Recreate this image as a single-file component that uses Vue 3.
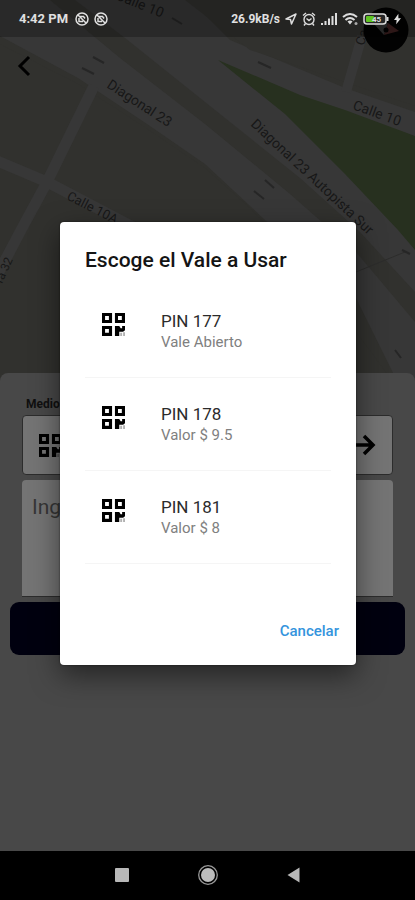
<script setup>
import { ref } from 'vue'

const note = ref('')
const vouchers = [
  { pin: 'PIN 177', detail: 'Vale Abierto' },
  { pin: 'PIN 178', detail: 'Valor $ 9.5' },
  { pin: 'PIN 181', detail: 'Valor $ 8' }
]
</script>

<template>
  <div class="screen">
    <svg width="0" height="0" class="defs" aria-hidden="true">
      <symbol id="qr" viewBox="0 0 24 24">
        <path fill-rule="evenodd" d="M0 0h10.500v10.500H0zM3.200 3.200v4h4v-4zM13.500 0H24v10.500H13.500zM16.700 3.200v4h4v-4zM0 13.500h10.500V24H0zM3.200 16.700v4h4v-4z" />
        <path d="M13.500 13.500h4.500l1.500 2.500h1.500v-2.500h3v4.500l-2 1.500h-4V24h-4.500z" />
        <path opacity=".3" d="M19 20.500h2V24h-2zM22 20h2v4h-2z" />
      </symbol>
      <symbol id="blocked" viewBox="0 0 14 14">
        <g fill="none" stroke="currentColor" stroke-width="1.500">
          <circle cx="7" cy="7" r="6" />
          <path d="M3 3l8 8M5 4.500h3.500l1.500 2M4 6v3.500h4" />
        </g>
      </symbol>
    </svg>

    <main class="page">
      <svg class="map" viewBox="0 0 415 383" preserveAspectRatio="xMidYMin slice" aria-hidden="true">
        <rect width="415" height="383" fill="#31312e" />
        <path fill="#373737" d="M0 0H190L230 40L345 88L415 112V383H398L356 298L265 220L205 164L150 126L78 78L0 36z" />
        <path fill="#31312e" d="M185 0H415V106L345 82L250 50z" />
        <path fill="#31312e" d="M50 0H75L125 38L215 110L300 178L360 232L415 292V322L356 252L290 194L205 124L120 58z" />
        <path fill="#31312e" d="M0 44L78 84L140 124L205 168L250 208L310 270L394 383H0z" />
        <path fill="#27301f" d="M218 60L300 95L345 110L415 136V250L398 230L345 174L285 114z" />
        <path d="M94 86L47 182L20 232L-8 285M-5 160L47 182L135 228" fill="none" stroke="#373737" stroke-width="11" />
        <path d="M362 36L346 92" fill="none" stroke="#373737" stroke-width="10" />
        <path d="M356 272L405 252" fill="none" stroke="#2d2d2c" stroke-width="1" />
        <path d="M93 57l11 6M82 68l12 6M172 18l10 6M258 62l13 6M265 180l9 8M254 191l10 8M395 350l6 8M402 250l8 4" fill="none" stroke="#262626" stroke-width="2" />
        <g fill="#171717" class="streets">
          <text font-size="14" transform="translate(106 87) rotate(33)">Diagonal 23</text>
          <text font-size="14" transform="translate(250 125) rotate(43)">Diagonal 23 Autopista Sur</text>
          <text font-size="14" transform="translate(352 109) rotate(20)">Calle 10</text>
          <text font-size="14" transform="translate(115 -1) rotate(22)">Calle 10</text>
          <text font-size="13" transform="translate(66 199) rotate(27)">Calle 10A</text>
          <text font-size="12" transform="translate(2 284) rotate(-66)">ra 32</text>
          <text font-size="13" transform="translate(364 46) rotate(-75)">Ca</text>
        </g>
      </svg>

      <form class="sheet" @submit.prevent>
        <div class="fields">
          <span class="label">Medio</span>
          <button type="button" class="method" aria-label="Medio">
            <svg class="qr"><use href="#qr" /></svg>
            <svg class="arrow" viewBox="0 0 24 24"><path d="M1 12h20M12 3l9 9-9 9" fill="none" stroke="#000" stroke-width="3.500" /></svg>
          </button>
          <textarea v-model="note" class="note" placeholder="Ingrese" aria-label="Ingrese"></textarea>
        </div>
        <button type="submit" class="submit" aria-label="Usar"></button>
      </form>
    </main>

    <nav class="nav">
      <button type="button" aria-label="Recientes"><svg viewBox="0 0 20 20"><rect x="3" y="3" width="14" height="14" rx="1" fill="#b8b8b8" /></svg></button>
      <button type="button" aria-label="Inicio"><svg viewBox="0 0 20 20"><circle cx="10" cy="10" r="9.300" fill="none" stroke="#999" stroke-width="1.300" /><circle cx="10" cy="10" r="7" fill="#bdbdbd" /></svg></button>
      <button type="button" aria-label="Volver"><svg viewBox="0 0 20 20"><path d="M15.500 2.500v15L3.500 10z" fill="#b8b8b8" /></svg></button>
    </nav>

    <button type="button" class="back" aria-label="Atrás">
      <svg viewBox="0 0 14 22"><path d="M12 2L3 11l9 9" fill="none" stroke="#000" stroke-width="3" /></svg>
    </button>
    <svg class="compass" viewBox="0 0 46 46" aria-hidden="true">
      <circle cx="23" cy="23" r="22.500" fill="#020202" />
      <path d="M11 17l14-1-4 12z" fill="#333" />
      <path d="M25 16l11 8-15 4z" fill="#3d1f1f" />
      <circle cx="23" cy="23" r="2.500" fill="#000" />
    </svg>

    <header class="status">
      <span class="time">4:42 PM</span>
      <svg class="badge"><use href="#blocked" /></svg>
      <svg class="badge"><use href="#blocked" /></svg>
      <span class="speed">26.9kB/s</span>
      <svg class="s12" viewBox="0 0 12 12"><path d="M1 6l10-5-4.500 10-1-4.500z" fill="none" stroke="#ddd" stroke-width="1.500" stroke-linejoin="round" /></svg>
      <svg class="s14" viewBox="0 0 14 14"><g fill="none" stroke="#ddd" stroke-width="1.400"><circle cx="7" cy="7.500" r="5" /><path d="M4.500 6.500L7 8.500l2.500-2M1 3.500L4 1M13 3.500L10 1M3.500 11.500L2 13.500M10.500 11.500l1.500 2" /></g></svg>
      <svg class="s16" viewBox="0 0 16 14"><path d="M0 11h2v2H0zM3.500 9h2v4h-2zM7 6.500h2V13H7zM10.500 4h2v9h-2zM14 1h2v12h-2z" fill="#ddd" /></svg>
      <svg class="s16" viewBox="0 0 16 14"><path d="M1 5q7-6 14 0M3.500 8q4.500-4 9 0" fill="none" stroke="#ddd" stroke-width="2" /><path d="M5.500 9.500q2.500-2 5 0L8 12.500z" fill="#ddd" /><circle cx="14" cy="11.500" r="1.500" fill="#aaa" /></svg>
      <svg class="battery" viewBox="0 0 26 14">
        <rect x="1" y="2" width="22" height="10" rx="3" fill="#272727" stroke="#ddd" stroke-width="1.500" />
        <rect x="3" y="4" width="8" height="6" rx="1" fill="#5fc421" />
        <path d="M24.500 5v4" stroke="#ddd" stroke-width="2" />
        <text x="9" y="10" font-size="8" font-weight="700" fill="#ddd">45</text>
      </svg>
      <svg class="bolt" viewBox="0 0 8 12"><path d="M5 0L0 7h3L2.500 12 8 5H5z" fill="#ddd" /></svg>
    </header>

    <div class="overlay">
      <section class="dialog" role="dialog" aria-modal="true" aria-labelledby="dialog-title">
        <h1 id="dialog-title">Escoge el Vale a Usar</h1>
        <ul>
          <li v-for="v in vouchers" :key="v.pin">
            <button type="button" class="voucher">
              <svg class="qr"><use href="#qr" /></svg>
              <span class="texts">
                <span class="pin">{{ v.pin }}</span>
                <span class="detail">{{ v.detail }}</span>
              </span>
            </button>
          </li>
        </ul>
        <button type="button" class="cancel">Cancelar</button>
      </section>
    </div>
  </div>
</template>

<style>
body {
  margin: 0;
  background: #484848;
}
</style>

<style scoped>
.screen {
  position: relative;
  display: flex;
  flex-direction: column;
  min-height: 100vh;
  overflow: hidden;
  background: #484848;
  font-family: Roboto, "Liberation Sans", sans-serif;
}
button {
  padding: 0;
  border: 0;
  background: none;
  font-family: inherit;
  cursor: pointer;
}
svg {
  display: block;
  flex: none;
}
.defs {
  position: absolute;
}
.page {
  flex: 1;
  display: flex;
  flex-direction: column;
}
.map {
  width: 100%;
  height: 383px;
}
.sheet {
  position: relative;
  flex: 1;
  display: flex;
  flex-direction: column;
  gap: 5px;
  margin-top: -10px;
  padding: 20px 10px;
  border-radius: 8px 8px 0 0;
  background: #484848;
}
.fields {
  display: flex;
  flex-direction: column;
  margin: 0 12px;
}
.label {
  padding: 0 4px;
  font-size: 12px;
  line-height: 22px;
  font-weight: 700;
  color: #101010;
}
.method {
  display: flex;
  align-items: center;
  justify-content: space-between;
  height: 60px;
  padding: 0 16px;
  border: 1px solid #2c2c2c;
  border-radius: 4px;
  background: #747474;
}
.qr {
  width: 23px;
  height: 23px;
}
.arrow {
  width: 24px;
  height: 24px;
}
.note {
  box-sizing: border-box;
  height: 117px;
  margin-top: 5px;
  padding: 10px;
  border: 0;
  border-bottom: 1px solid #2c2c2c;
  border-radius: 4px 4px 0 0;
  background: #747474;
  font-family: inherit;
  font-size: 21px;
  line-height: 34px;
  resize: none;
}
.note::placeholder {
  color: #363636;
  opacity: 1;
}
.submit {
  height: 53px;
  border-radius: 9px;
  background: #00000f;
}
.nav {
  box-sizing: border-box;
  display: flex;
  justify-content: center;
  gap: 66px;
  height: 49px;
  padding-bottom: 2px;
  background: #000;
}
.nav button {
  display: grid;
  place-items: center;
  width: 20px;
}
.nav svg {
  width: 20px;
  height: 20px;
}
.back {
  position: absolute;
  top: 55px;
  left: 17px;
}
.back svg {
  width: 14px;
  height: 22px;
}
.compass {
  position: absolute;
  top: 7px;
  right: 6px;
  width: 46px;
  height: 46px;
}
.status {
  position: absolute;
  inset: 0 0 auto;
  box-sizing: border-box;
  display: flex;
  align-items: center;
  gap: 5px;
  height: 37px;
  padding: 0 14px 0 19px;
  background: rgb(0 0 0 / 25%);
  color: #e0e0e0;
  font-size: 13px;
  font-weight: 700;
}
.time {
  margin-right: 2px;
}
.badge {
  width: 14px;
  height: 14px;
}
.speed {
  margin-left: auto;
  font-size: 12px;
}
.s12 {
  width: 12px;
  height: 12px;
}
.s14 {
  width: 14px;
  height: 14px;
}
.s16 {
  width: 16px;
  height: 14px;
}
.battery {
  width: 26px;
  height: 14px;
}
.bolt {
  width: 7px;
  height: 12px;
}
.overlay {
  position: absolute;
  inset: 36px 0 50px;
  display: flex;
  align-items: center;
  justify-content: center;
  padding: 0 59px 0 60px;
}
.dialog {
  display: flex;
  flex-direction: column;
  width: 100%;
  padding: 25px 0 16px;
  border-radius: 4px;
  background: #fff;
  box-shadow: 0 10px 28px rgb(0 0 0 / 50%), 0 0 2px rgb(0 0 0 / 60%);
}
h1 {
  margin: 0 25px 12px;
  font-size: 21px;
  line-height: 26px;
  font-weight: 500;
  color: #141414;
}
ul {
  margin: 0 25px;
  padding: 0;
  list-style: none;
}
li {
  border-bottom: 1px solid #f5f5f5;
}
.voucher {
  display: flex;
  gap: 36px;
  width: 100%;
  height: 92px;
  padding: 25px 17px 0;
  text-align: left;
}
.voucher .qr {
  margin-top: 3px;
}
.texts {
  display: flex;
  flex-direction: column;
}
.pin {
  font-size: 17px;
  line-height: 22px;
  color: #2b2b2b;
}
.detail {
  font-size: 15px;
  line-height: 20px;
  color: #808080;
}
.cancel {
  align-self: flex-end;
  height: 36px;
  margin: 49px 17px 0 0;
  font-size: 15px;
  font-weight: 500;
  color: #3494dd;
}
</style>
